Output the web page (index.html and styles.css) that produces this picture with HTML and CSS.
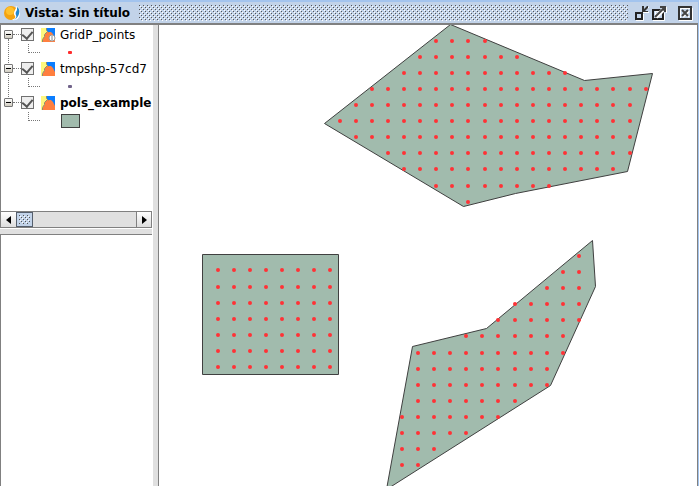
FILE: index.html
```html
<!DOCTYPE html>
<html lang="es">
<head>
<meta charset="utf-8">
<title>Vista: Sin título</title>
<link rel="stylesheet" href="styles.css">
</head>
<body>
<svg class="defs" aria-hidden="true">
  <symbol id="layer" viewBox="0 0 14 14">
    <path fill="#fff77e" d="M0 0h7v14H0z"/>
    <path fill="#0a7dff" d="M6 0h8v14H6z"/>
    <path fill="#ff7f3f" d="M2 14V11L4 8V6L6 4H10L12 6L14 10V14z"/>
    <path fill="none" stroke="#8c8c70" d="M1.500 14V11.500L3.500 8.500V6.500L6.500 3.500M5.500 0V2.500L7.500 4.500"/>
  </symbol>
</svg>
<div class="window">
  <header class="titlebar">
    <svg class="logo" width="16" height="16" viewBox="0 0 16 16" aria-hidden="true">
      <circle cx="7" cy="8" r="7" fill="#f5a30f"/>
      <circle cx="6" cy="6" r="4" fill="#ffc12c"/>
      <path fill="#fff" d="M11 1c2 1 1 2 0 4s-2 4 0 6c1 2-1 3-3 4 6 1 8-3 8-8 0-3-2-6-5-6z"/>
      <path fill="#2388cf" d="M13 2c2 1 3 4 2 7-1 3-3 5-5 6 2-2 3-3 2-5-1-2 0-3 1-5 0-2 0-2 0-3z"/>
    </svg>
    <h1>Vista: Sin título</h1>
    <span class="bumps"></span>
    <button class="tool" aria-label="Minimizar"><svg width="15" height="16" viewBox="0 0 15 16">
      <path fill="none" stroke="#fff" d="M2 15.500h7.500V9M9 7.500h6M10 6l5-4"/>
      <path fill="none" stroke="#222" stroke-width="2" d="M2 8h6v6H2z"/>
      <path fill="#333" d="M8 1h2v3l3-3h1v2l-3 3h3v1H8z"/>
    </svg></button>
    <button class="tool" aria-label="Maximizar"><svg width="15" height="16" viewBox="0 0 15 16">
      <path fill="none" stroke="#fff" d="M1 15.500h11.500V8M14.500 2v6M3.500 13V6.500H8"/>
      <path fill="none" stroke="#222" stroke-width="2" d="M1 5h10v9H1z"/>
      <path fill="none" stroke="#fff" stroke-width="4" d="M4 12l7-7"/>
      <path fill="none" stroke="#444" stroke-width="2" d="M3 12l9-9"/>
      <path fill="#444" d="M8 1h6v6h-2V4L10 3H8z"/>
    </svg></button>
    <button class="tool close" aria-label="Cerrar"><svg width="15" height="16" viewBox="0 0 15 16">
      <path fill="none" stroke="#fff" d="M1 15.500h13.500V3M2.500 13V3.500H13"/>
      <path fill="none" stroke="#333" stroke-width="2" d="M1 2h12v12H1z"/>
      <path stroke="#fff" stroke-width="2" d="M5 6l6 6M11 6l-6 6"/>
      <path stroke="#444" stroke-width="2" d="M4 5l6 6M10 5l-6 6"/>
    </svg></button>
  </header>
  <main class="content">
    <aside class="side">
      <section class="toc">
        <ul class="tree">
          <li>
            <div class="row"><button class="toggle" aria-label="Contraer"></button><span class="dots"></span><input type="checkbox" id="l1" checked><span class="icon"><svg width="14" height="14"><use href="#layer"/></svg><svg class="info" width="8" height="8" viewBox="0 0 8 8"><circle cx="4" cy="4" r="3" fill="#fff" stroke="#999"/><path stroke="#888" d="M4 2v4"/></svg></span><label for="l1">GridP_points</label></div>
            <div class="legend"><span class="elbow"></span><span class="point red"></span></div>
          </li>
          <li>
            <div class="row"><button class="toggle" aria-label="Contraer"></button><span class="dots"></span><input type="checkbox" id="l2" checked><span class="icon"><svg width="14" height="14"><use href="#layer"/></svg></span><label for="l2">tmpshp-57cd7</label></div>
            <div class="legend"><span class="elbow"></span><span class="point violet"></span></div>
          </li>
          <li>
            <div class="row active"><button class="toggle" aria-label="Contraer"></button><span class="dots"></span><input type="checkbox" id="l3" checked><span class="icon"><svg width="14" height="14"><use href="#layer"/></svg></span><label for="l3">pols_example</label></div>
            <div class="legend"><span class="elbow"></span><span class="swatch"></span></div>
          </li>
        </ul>
        <div class="scroll">
          <button aria-label="Izquierda"><svg width="5" height="8"><path d="M5 0v8L0 4z"/></svg></button>
          <span class="thumb"></span><span class="track"></span>
          <button aria-label="Derecha"><svg width="5" height="8"><path d="M0 0v8l5-4z"/></svg></button>
        </div>
      </section>
      <div class="hsplit"></div>
      <section class="locator"></section>
    </aside>
    <div class="vsplit"></div>
    <section class="map">
      <svg width="100%" height="100%">
        <g transform="translate(-159 -25)">
          <g class="polygons">
            <path d="M450.500 24.500L584.500 80.500L652.500 73.500L627.500 171.500L515.500 193.500L463.500 206.500L324.500 123.500z"/>
            <path d="M202.500 254.500h136v120h-136z"/>
            <path d="M592.500 240.500L595.500 286.500L550.500 385.500L386.500 489.500L412.500 346.500L486.500 328.500z"/>
          </g>
          <path id="points" class="points"/>
        </g>
      </svg>
    </section>
  </main>
</div>
<script src="points.js"></script>
</body>
</html>
```
FILE: styles.css
```css
* { box-sizing: border-box; }
body { margin: 0; font: 12px/16px "DejaVu Sans", sans-serif; color: #000; }
button { padding: 0; border: 0; background: none; font: inherit; }
svg { display: block; }
.defs { position: absolute; width: 0; height: 0; }
.window { display: flex; flex-direction: column; height: 100vh; overflow: hidden; border-right: 1px solid #a3c4ee; background: #fff; }
.titlebar { display: flex; align-items: center; flex: none; height: 25px; padding: 0 5px 0 4px; background: #c2d3e9; border-top: 2px solid #a3c4ee; border-bottom: 2px solid #808080; }
.logo { flex: none; }
h1 { margin: 0 9px 0 5px; font-size: 12px; line-height: 16px; white-space: nowrap; }
.bumps { flex: 1; height: 16px; margin-right: 6px; }
.bumps, .thumb {
  background-color: #c2d3e9;
  background-image:
    conic-gradient(from 270deg at 1px 1px, #555 25%, #0000 0),
    conic-gradient(from 270deg at 1px 1px, #555 25%, #0000 0),
    conic-gradient(from 270deg at 1px 1px, #fff 25%, #0000 0),
    conic-gradient(from 270deg at 1px 1px, #fff 25%, #0000 0);
  background-size: 4px 4px;
  background-position: 0 0, 2px 2px, 1px 1px, 3px 3px;
}
.tool { flex: none; margin-right: 3px; }
.tool.close { margin: 0 0 0 8px; }
.content { display: flex; flex: 1; min-height: 0; border-right: 1px solid #808080; }
.side { display: flex; flex: 0 0 152px; flex-direction: column; min-width: 0; }
.toc { display: flex; flex: 0 0 203px; flex-direction: column; border-left: 1px solid #808080; }
.tree { position: relative; flex: 1; margin: 0; padding: 0; list-style: none; overflow: hidden; }
.tree::before { content: ""; position: absolute; left: 7px; top: 14px; height: 60px; border-left: 1px dotted #777; }
.tree li { height: 34px; }
.row { display: flex; align-items: center; height: 19px; white-space: nowrap; }
.active { font-weight: bold; }
.toggle { position: relative; flex: none; width: 9px; height: 9px; margin-left: 3px; border: 1px solid #777; border-radius: 1px; background: linear-gradient(#fff, #d0ccc0); }
.toggle::after { content: ""; position: absolute; left: 1px; right: 1px; top: 3px; height: 1px; background: #000; }
.dots { flex: none; width: 8px; border-top: 1px dotted #777; }
input { appearance: none; flex: none; display: grid; place-items: center; width: 13px; height: 13px; margin: 0; border: 1px solid #707070; background: #eee; }
input:checked::after { content: ""; width: 5px; height: 8px; margin-top: -2px; border: solid #555; border-width: 0 2px 2px 0; transform: rotate(40deg); }
.icon { position: relative; flex: none; width: 14px; margin: 0 5px 0 7px; }
.info { position: absolute; right: -1px; bottom: 0; }
.legend { display: flex; align-items: center; height: 17px; }
.elbow { flex: none; align-self: flex-start; width: 12px; height: 9px; margin-left: 27px; border: dotted #777; border-width: 0 0 1px 1px; }
.point { width: 4px; height: 3px; margin-left: 28px; border-radius: 1px; }
.red { background: #ff2c2c; }
.violet { background: #71638a; }
.swatch { width: 19px; height: 14px; margin-left: 21px; border: 1px solid #404040; background: #a1bbad; }
.scroll { display: flex; flex: none; height: 17px; border: 1px solid #808080; border-left: 0; background: #e0e0e0; }
.scroll button { display: grid; place-items: center; flex: none; width: 15px; background: linear-gradient(#fff, #ddd); }
.scroll button:last-child { border-left: 1px solid #808080; }
.thumb { flex: none; width: 17px; padding: 2px; border: 1px solid #555f6d; background-clip: content-box; box-shadow: inset 0 0 0 2px #c2d3e9; }
.track { flex: 1; }
.hsplit { flex: none; height: 7px; background: #e0e0e0; border-top: 1px solid #fff; border-bottom: 1px solid #808080; }
.locator { flex: 1; border-left: 1px solid #808080; }
.vsplit { flex: none; width: 7px; border-left: 1px solid #fff; border-right: 1px solid #808080; background: #e0e0e0; }
.map { flex: 1; min-width: 0; overflow: hidden; }
.polygons { fill: #a1bbad; stroke: #404040; }
.points { fill: none; stroke: #ff3236; stroke-width: 4px; stroke-linecap: round; }
```
FILE: points.js
```js
// Each row: y, first x, last x. Each group lists the columns of its grid.
const range = (a, b) => Array.from({ length: (b - a) / 16 + 1 }, (_, i) => a + i * 16);
const groups = [
  { columns: [...range(340, 468), ...range(485, 613), 630, 646],
    rows: [[41, 436, 485], [57, 420, 517], [73, 404, 565], [89, 372, 646], [105, 356, 630], [121, 340, 630],
      [137, 356, 630], [153, 388, 630], [169, 404, 613], [186, 436, 549], [202, 468, 468]] },
  { columns: range(218, 330),
    rows: [270, 287, 303, 319, 335, 351, 367].map(y => [y, 218, 330]) },
  { columns: [...range(402, 498), ...range(515, 579)],
    rows: [[256, 579, 579], [272, 563, 579], [288, 547, 579], [304, 515, 579], [320, 498, 579], [336, 466, 563],
      [353, 418, 563], [369, 418, 547], [385, 418, 547], [401, 418, 515], [417, 402, 498], [433, 402, 466],
      [449, 402, 434], [465, 402, 418]] }
];
document.getElementById("points").setAttribute("d", groups.map(g => g.rows.map(([y, a, b]) =>
  g.columns.filter(x => x >= a && x <= b).map(x => `M${x} ${y}h0`).join("")).join("")).join(""));
```
